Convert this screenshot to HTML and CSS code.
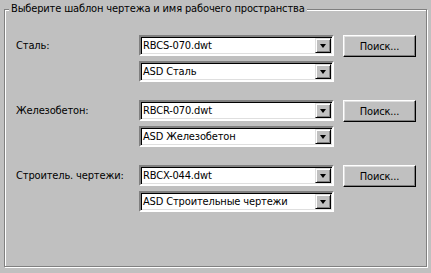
FILE: index.html
```html
<!DOCTYPE html>
<html lang="ru">
  <head>
    <meta charset="UTF-8" />
    <title>Шаблоны чертежей</title>
    <link rel="stylesheet" href="styles.css">
  </head>
  <body>
    <fieldset class="group">
      <legend>Выберите шаблон чертежа и имя рабочего пространства</legend>

      <div class="rows">
        <div class="row">
          <label class="row-label">Сталь:</label>
          <div class="combos">
            <div class="combo"><span class="combo-text">RBCS-070.dwt</span><span class="combo-btn"></span></div>
            <div class="combo"><span class="combo-text">ASD Сталь</span><span class="combo-btn"></span></div>
          </div>
          <button class="btn">Поиск...</button>
        </div>

        <div class="row">
          <label class="row-label">Железобетон:</label>
          <div class="combos">
            <div class="combo"><span class="combo-text">RBCR-070.dwt</span><span class="combo-btn"></span></div>
            <div class="combo"><span class="combo-text">ASD Железобетон</span><span class="combo-btn"></span></div>
          </div>
          <button class="btn">Поиск...</button>
        </div>

        <div class="row">
          <label class="row-label">Строитель. чертежи:</label>
          <div class="combos">
            <div class="combo"><span class="combo-text">RBCX-044.dwt</span><span class="combo-btn"></span></div>
            <div class="combo"><span class="combo-text">ASD Строительные чертежи</span><span class="combo-btn"></span></div>
          </div>
          <button class="btn">Поиск...</button>
        </div>
      </div>
    </fieldset>
  </body>
</html>
```

FILE: styles.css
```css
* {
  margin: 0;
  padding: 0;
  box-sizing: border-box;
}

html,
body {
  width: 431px;
  height: 273px;
  background: #c0c0c0;
  overflow: hidden;
}

body {
  font-family: "DejaVu Sans Condensed", "DejaVu Sans", sans-serif;
  font-stretch: condensed;
  font-size: 11px;
  letter-spacing: -0.15px;
  color: #000;
  padding: 2px 4px 0 4px;
}

/* рамка группы: вдавленная линия */
.group {
  height: 265px;
  border: 1px solid #808080;
  box-shadow: 1px 1px 0 #fff, inset 1px 1px 0 #fff;
}

.group legend {
  margin-left: 4px;
  padding: 0 2px;
  line-height: 14px;
  background: #c0c0c0;
}

.rows {
  display: flex;
  flex-direction: column;
  gap: 18px;
  padding: 19px 0 0 11px;
}

.row {
  display: grid;
  grid-template-columns: 123px 195px 73px;
  align-items: start;
}

.row-label {
  line-height: 21px;
}

.combos {
  display: flex;
  flex-direction: column;
  gap: 5px;
}

.combo {
  display: flex;
  align-items: center;
  height: 21px;
  background: #fff;
  border: 2px solid;
  border-color: #808080 #fff #fff #808080;
  box-shadow: inset 1px 1px 0 #000, inset -1px -1px 0 #dfdfdf;
  padding: 0 1px 0 2px;
}

.combo-text {
  flex: 1;
  line-height: 15px;
}

.combo-btn {
  position: relative;
  width: 16px;
  height: 15px;
  background: #c0c0c0;
  border: 1px solid;
  border-color: #dfdfdf #000 #000 #dfdfdf;
  box-shadow: inset 1px 1px 0 #fff, inset -1px -1px 0 #808080;
}

/* стрелка вниз */
.combo-btn::after {
  content: "";
  position: absolute;
  left: 4px;
  top: 5px;
  border-left: 3.5px solid transparent;
  border-right: 3.5px solid transparent;
  border-top: 4px solid #000;
}

.btn {
  margin-left: 9px;
  width: 73px;
  height: 22px;
  font: inherit;
  letter-spacing: inherit;
  background: #c0c0c0;
  border: 1px solid;
  border-color: #fff #000 #000 #fff;
  box-shadow: inset -1px -1px 0 #808080, inset 1px 1px 0 #dfdfdf;
}
```
